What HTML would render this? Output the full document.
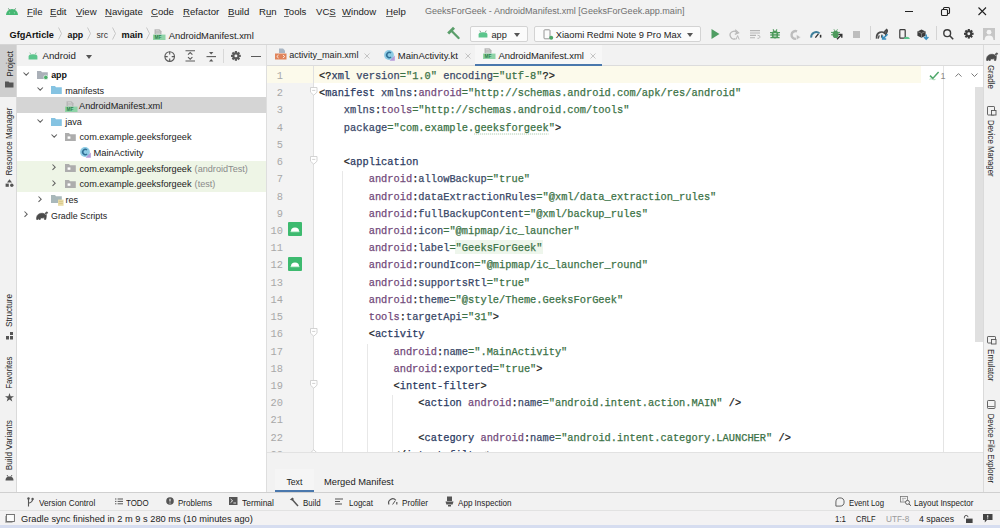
<!DOCTYPE html>
<html><head><meta charset="utf-8"><style>
*{margin:0;padding:0;box-sizing:border-box}
html,body{width:1000px;height:528px;overflow:hidden;background:#f2f2f2;font-family:"Liberation Sans",sans-serif;color:#222;position:relative}
.a{position:absolute}
.t{position:absolute;white-space:nowrap;line-height:1}
u{text-decoration:underline;text-decoration-thickness:0.8px;text-underline-offset:0.5px;text-decoration-color:#666}
svg{position:absolute;overflow:visible}
.cl{position:absolute;left:0;white-space:pre;font-family:"Liberation Mono",monospace;font-size:10.35px;line-height:1;color:#222;-webkit-text-stroke:0.25px currentColor}
.ln{position:absolute;width:16px;text-align:right;font-family:"Liberation Mono",monospace;font-size:10.35px;line-height:1;color:#a8a8a8}
.tg{color:#2b3a62}.at{color:#394868}.ns{color:#72497a}.vl{color:#3b7246}.pu{color:#222}
.vt{position:absolute;white-space:nowrap;line-height:1;writing-mode:vertical-rl}
.vb{transform:rotate(180deg)}
</style></head><body>
<div class="a" style="left:0px;top:0px;width:1000px;height:21px;background:#f2f2f2;"></div>
<div class="a" style="left:0px;top:21px;width:1000px;height:1px;background:#e4e4e4;"></div>
<div class="a" style="left:0px;top:21px;width:1000px;height:23px;background:#f2f2f2;"></div>
<div class="a" style="left:0px;top:44px;width:1000px;height:1px;background:#d6d6d6;"></div>
<div class="a" style="left:0px;top:45px;width:16px;height:448px;background:#f2f2f2;"></div>
<div class="a" style="left:0px;top:45px;width:16px;height:52px;background:#cecece;"></div>
<div class="a" style="left:16px;top:45px;width:1px;height:448px;background:#dadada;"></div>
<div class="a" style="left:17px;top:45px;width:249px;height:21px;background:#f2f2f2;"></div>
<div class="a" style="left:17px;top:66px;width:249px;height:427px;background:#ffffff;"></div>
<div class="a" style="left:266px;top:45px;width:1px;height:448px;background:#dedede;"></div>
<div class="a" style="left:267px;top:45px;width:716px;height:20px;background:#f2f2f2;"></div>
<div class="a" style="left:267px;top:65px;width:716px;height:1px;background:#dcdcdc;"></div>
<div class="a" style="left:267px;top:66px;width:47px;height:387px;background:#f3f3f3;"></div>
<div class="a" style="left:314px;top:66px;width:669px;height:387px;background:#ffffff;"></div>
<div class="a" style="left:267px;top:452px;width:716px;height:41px;background:#f2f2f2;"></div>
<div class="a" style="left:267px;top:452px;width:716px;height:1px;background:#e2e2e2;"></div>
<div class="a" style="left:983px;top:45px;width:17px;height:448px;background:#f2f2f2;"></div>
<div class="a" style="left:983px;top:45px;width:1px;height:448px;background:#dadada;"></div>
<div class="a" style="left:0px;top:492px;width:1000px;height:1px;background:#d0d0d0;"></div>
<div class="a" style="left:0px;top:493px;width:1000px;height:17px;background:#f2f2f2;"></div>
<div class="a" style="left:0px;top:510px;width:1000px;height:1px;background:#e2e2e2;"></div>
<div class="a" style="left:0px;top:511px;width:1000px;height:14px;background:#f3f2f3;"></div>
<div class="a" style="left:0px;top:525px;width:1000px;height:3px;background:#d6ddf0;"></div>
<svg style="left:5px;top:6px;" width="14" height="10" viewBox="0 0 14 10"><path d="M1 9 A6 6 0 0 1 13 9 Z" fill="#46b874"/><path d="M3.4 2.4 L4.6 4.2 M10.6 2.4 L9.4 4.2" stroke="#5a9a70" stroke-width="1"/><circle cx="4.6" cy="6.8" r="0.6" fill="#9fdcb5"/><circle cx="9.4" cy="6.8" r="0.6" fill="#9fdcb5"/></svg>
<span class="t" style="left:27px;top:7px;font-size:9.6px;color:#1c1c1c;font-weight:normal;"><u>F</u>ile</span>
<span class="t" style="left:50px;top:7px;font-size:9.6px;color:#1c1c1c;font-weight:normal;"><u>E</u>dit</span>
<span class="t" style="left:76px;top:7px;font-size:9.6px;color:#1c1c1c;font-weight:normal;"><u>V</u>iew</span>
<span class="t" style="left:105px;top:7px;font-size:9.6px;color:#1c1c1c;font-weight:normal;"><u>N</u>avigate</span>
<span class="t" style="left:151px;top:7px;font-size:9.6px;color:#1c1c1c;font-weight:normal;"><u>C</u>ode</span>
<span class="t" style="left:183px;top:7px;font-size:9.6px;color:#1c1c1c;font-weight:normal;"><u>R</u>efactor</span>
<span class="t" style="left:228px;top:7px;font-size:9.6px;color:#1c1c1c;font-weight:normal;"><u>B</u>uild</span>
<span class="t" style="left:259px;top:7px;font-size:9.6px;color:#1c1c1c;font-weight:normal;">R<u>u</u>n</span>
<span class="t" style="left:284px;top:7px;font-size:9.6px;color:#1c1c1c;font-weight:normal;"><u>T</u>ools</span>
<span class="t" style="left:316px;top:7px;font-size:9.6px;color:#1c1c1c;font-weight:normal;">VC<u>S</u></span>
<span class="t" style="left:342px;top:7px;font-size:9.6px;color:#1c1c1c;font-weight:normal;"><u>W</u>indow</span>
<span class="t" style="left:386px;top:7px;font-size:9.6px;color:#1c1c1c;font-weight:normal;"><u>H</u>elp</span>
<span class="t" style="left:425px;top:7px;font-size:9.05px;color:#707070;font-weight:normal;">GeeksForGeek - AndroidManifest.xml [GeeksForGeek.app.main]</span>
<div class="a" style="left:905px;top:11px;width:8px;height:1px;background:#222;"></div>
<svg style="left:940px;top:6px;" width="11" height="10" viewBox="0 0 11 10"><rect x="1.5" y="3.5" width="6" height="6" rx="1" fill="none" stroke="#222" stroke-width="1.1"/><path d="M3.5 3.5 V2.5 Q3.5 1.5 4.5 1.5 H8.5 Q9.5 1.5 9.5 2.5 V6.5 Q9.5 7.5 8.5 7.5 H7.5" fill="none" stroke="#222" stroke-width="1.1"/></svg>
<svg style="left:978px;top:7px;" width="9" height="9" viewBox="0 0 9 9"><path d="M0.5 0.5 L8 8 M8 0.5 L0.5 8" stroke="#222" stroke-width="1.1"/></svg>
<span class="t" style="left:9.5px;top:30.8px;font-size:9.2px;color:#111;font-weight:bold;">GfgArticle</span>
<svg style="left:58px;top:27px;" width="4" height="13" viewBox="0 0 4 13"><path d="M0.5 0.5 L3.5 6.5 L0.5 12.5" fill="none" stroke="#c2c2c2" stroke-width="0.9"/></svg>
<span class="t" style="left:67.5px;top:30.8px;font-size:8.8px;color:#111;font-weight:bold;">app</span>
<svg style="left:87px;top:27px;" width="4" height="13" viewBox="0 0 4 13"><path d="M0.5 0.5 L3.5 6.5 L0.5 12.5" fill="none" stroke="#c2c2c2" stroke-width="0.9"/></svg>
<span class="t" style="left:96.5px;top:30.8px;font-size:8.6px;color:#333;font-weight:normal;">src</span>
<svg style="left:112px;top:27px;" width="4" height="13" viewBox="0 0 4 13"><path d="M0.5 0.5 L3.5 6.5 L0.5 12.5" fill="none" stroke="#c2c2c2" stroke-width="0.9"/></svg>
<span class="t" style="left:121.5px;top:30.8px;font-size:9.2px;color:#111;font-weight:bold;">main</span>
<svg style="left:146px;top:27px;" width="4" height="13" viewBox="0 0 4 13"><path d="M0.5 0.5 L3.5 6.5 L0.5 12.5" fill="none" stroke="#c2c2c2" stroke-width="0.9"/></svg>
<svg style="left:153px;top:28.5px;" width="13" height="11" viewBox="0 0 13 11"><path d="M1.5 0.3 H6.5 L8.5 2.3 V5.5 H1.5 Z" fill="#b8b8b8"/><path d="M3 1.6 H6 M3 3 H7 M3 4.4 H7" stroke="#dedede" stroke-width="0.6"/><rect x="0" y="5.6" width="12.5" height="5.4" fill="#8fd3a6"/><text x="1.4" y="10.2" font-family="Liberation Sans" font-weight="bold" font-size="4.8" fill="#2b7d4b">MF</text></svg>
<span class="t" style="left:168.8px;top:30.8px;font-size:9.4px;color:#222;font-weight:normal;">AndroidManifest.xml</span>
<svg style="left:446px;top:26px;" width="14" height="14" viewBox="0 0 14 14"><path d="M2.2 7.6 L8 1.8" stroke="#5a9e6a" stroke-width="2.8" stroke-linecap="butt"/><path d="M5.4 4.8 L12.6 12" stroke="#5a9e6a" stroke-width="2.3" stroke-linecap="round"/></svg>
<div class="a" style="left:469.5px;top:25.5px;width:58px;height:16px;background:#fbfbfb;border:1px solid #d3d3d3;border-radius:2px"></div>
<svg style="left:477.5px;top:29.5px;" width="10" height="8" viewBox="0 0 10 8"><path d="M0.6 7.4 V4.4 Q0.6 2.2 5 2.2 Q9.4 2.2 9.4 4.4 V7.4 Z" fill="#5bc58c"/><path d="M1.8 0.6 L2.8 2.4 M8.2 0.6 L7.2 2.4" stroke="#6a8a76" stroke-width="0.8"/></svg>
<span class="t" style="left:491.5px;top:30.7px;font-size:9.2px;color:#222;font-weight:normal;">app</span>
<svg style="left:514px;top:32.5px;" width="6" height="4" viewBox="0 0 6 4"><path d="M0 0 H6 L3 4 Z" fill="#555"/></svg>
<div class="a" style="left:533.5px;top:25.5px;width:167px;height:16px;background:#fbfbfb;border:1px solid #d3d3d3;border-radius:2px"></div>
<svg style="left:543px;top:28.5px;" width="11" height="11" viewBox="0 0 11 11"><rect x="1" y="0.8" width="6" height="9" rx="0.8" fill="none" stroke="#8a8a8a" stroke-width="0.9"/><circle cx="8.2" cy="8.8" r="2" fill="#4ea86a"/></svg>
<span class="t" style="left:555.7px;top:30.7px;font-size:9.35px;color:#222;font-weight:normal;">Xiaomi Redmi Note 9 Pro Max</span>
<svg style="left:687px;top:32.5px;" width="6" height="4" viewBox="0 0 6 4"><path d="M0 0 H6 L3 4 Z" fill="#555"/></svg>
<svg style="left:710.5px;top:29px;" width="9" height="10" viewBox="0 0 9 10"><path d="M0.5 0 L8.5 5 L0.5 10 Z" fill="#4f9d62"/></svg>
<svg style="left:728.5px;top:28.5px;" width="11" height="11" viewBox="0 0 11 11"><path d="M8.2 4.2 A3.8 3.8 0 1 0 6.5 9.6" fill="none" stroke="#b9b9b9" stroke-width="1.3"/><path d="M6.2 0.8 L9.6 3.8 L5.8 5.4" fill="none" stroke="#b9b9b9" stroke-width="1.2"/><path d="M7 10.5 L8.6 6.6 L10.2 10.5" fill="none" stroke="#b9b9b9" stroke-width="1"/></svg>
<svg style="left:750px;top:30px;" width="11" height="9" viewBox="0 0 11 9"><path d="M0 0.6 H10 M0 3 H10 M0 5.4 H6 M0 7.8 H5" stroke="#b5b5b5" stroke-width="1.1"/><path d="M7.5 5.2 Q10.5 5.4 10 7.2 Q9.6 8.6 7.4 8.3" fill="none" stroke="#b5b5b5" stroke-width="0.9"/></svg>
<svg style="left:770px;top:28.8px;" width="10" height="10" viewBox="0 0 10 10"><ellipse cx="5" cy="5.6" rx="3.4" ry="3.8" fill="#4d9a5c"/><path d="M0 3.6 H10 M0 6 H10 M0.4 8.6 H9.6 M3 0.4 L4 2 M7 0.4 L6 2" stroke="#4d9a5c" stroke-width="1.1"/><rect x="3.6" y="4.2" width="2.8" height="1" fill="#d8ecd9"/><rect x="3.6" y="6.6" width="2.8" height="1" fill="#d8ecd9"/></svg>
<svg style="left:789.5px;top:29.5px;" width="11" height="10" viewBox="0 0 11 10"><path d="M7 1.4 A3.9 3.9 0 1 0 6.2 8.8" fill="none" stroke="#bdbdbd" stroke-width="2.4"/><path d="M6.4 4.4 L10.8 7.2 L6.4 10 Z" fill="#bdbdbd" stroke="#f2f2f2" stroke-width="0.6"/></svg>
<svg style="left:809.5px;top:30.5px;" width="12" height="7" viewBox="0 0 12 7"><path d="M1.2 6.6 A5 5 0 0 1 9.6 2.4" fill="none" stroke="#3f7f9b" stroke-width="1.9"/><path d="M5.4 6.6 L8.4 2.8" stroke="#2d2d2d" stroke-width="1.3"/><path d="M10.6 3.8 V6.6" stroke="#2d2d2d" stroke-width="1.5"/></svg>
<svg style="left:831px;top:28.8px;" width="12" height="11" viewBox="0 0 12 11"><ellipse cx="4.6" cy="5.4" rx="3" ry="3.6" fill="#4d9a5c"/><path d="M0 3.4 H9 M0 5.8 H5 M3 0.4 L3.8 1.8 M6.4 0.4 L5.6 1.8" stroke="#4d9a5c" stroke-width="1"/><path d="M6 10.2 L10.6 5.6 M7.4 5.4 H10.8 V8.8" fill="none" stroke="#333" stroke-width="1.4"/></svg>
<div class="a" style="left:853px;top:30.5px;width:7px;height:7px;background:#bdbdbd;"></div>
<div class="a" style="left:869.5px;top:25.5px;width:1px;height:14px;background:#d4d4d4;"></div>
<svg style="left:876px;top:29px;" width="13" height="11" viewBox="0 0 13 11"><path d="M0.6 9.6 Q0.2 4.8 3.8 3.4 Q6.6 2.4 8.4 4 Q9 1.6 10.6 0.6 Q11.8 1.6 10.6 3.6 Q9.6 5 9.8 7" fill="none" stroke="#4a4a4a" stroke-width="1.7"/><path d="M2.2 9.6 L3.2 6.4 M5.6 8.6 L6 5.6" stroke="#4a4a4a" stroke-width="1.4"/><path d="M11.6 5.2 L7 9.6 M6.6 6.4 V10 H10.2" fill="none" stroke="#3a8fbf" stroke-width="1.5"/></svg>
<svg style="left:898.5px;top:29px;" width="11" height="10" viewBox="0 0 11 10"><rect x="0.8" y="0.6" width="5.4" height="8.6" rx="0.8" fill="none" stroke="#3a3a3a" stroke-width="1.2"/><path d="M4.6 10 A3.4 3.4 0 0 1 11 10 Z" fill="#5bc58c"/></svg>
<svg style="left:917px;top:28.5px;" width="12" height="11" viewBox="0 0 12 11"><path d="M4.5 0.4 L8.6 2.4 V6.8 L4.5 8.8 L0.4 6.8 V2.4 Z" fill="#3c3c3c"/><path d="M0.6 2.5 L4.5 4.4 L8.4 2.5 M4.5 4.4 V8.6" stroke="#999" stroke-width="0.7" fill="none"/><path d="M9.2 5.6 V10 M7 8 L9.2 10.2 L11.4 8" fill="none" stroke="#3a8fbf" stroke-width="1.5"/></svg>
<div class="a" style="left:935.5px;top:25.5px;width:1px;height:14px;background:#d4d4d4;"></div>
<svg style="left:943px;top:28.5px;" width="11" height="11" viewBox="0 0 11 11"><circle cx="4.2" cy="4.2" r="3.4" fill="none" stroke="#3c3c3c" stroke-width="1.4"/><path d="M6.8 6.8 L10.2 10.2" stroke="#3c3c3c" stroke-width="1.6"/></svg>
<svg style="left:963.8px;top:28.8px;" width="9.6" height="9.6" viewBox="0 0 9.6 9.6"><rect x="3.74" y="0" width="2.11" height="2.88" fill="#3c3c3c" transform="rotate(0 4.8 4.8)"/><rect x="3.74" y="0" width="2.11" height="2.88" fill="#3c3c3c" transform="rotate(45 4.8 4.8)"/><rect x="3.74" y="0" width="2.11" height="2.88" fill="#3c3c3c" transform="rotate(90 4.8 4.8)"/><rect x="3.74" y="0" width="2.11" height="2.88" fill="#3c3c3c" transform="rotate(135 4.8 4.8)"/><rect x="3.74" y="0" width="2.11" height="2.88" fill="#3c3c3c" transform="rotate(180 4.8 4.8)"/><rect x="3.74" y="0" width="2.11" height="2.88" fill="#3c3c3c" transform="rotate(225 4.8 4.8)"/><rect x="3.74" y="0" width="2.11" height="2.88" fill="#3c3c3c" transform="rotate(270 4.8 4.8)"/><rect x="3.74" y="0" width="2.11" height="2.88" fill="#3c3c3c" transform="rotate(315 4.8 4.8)"/><circle cx="4.8" cy="4.8" r="3.46" fill="#3c3c3c"/><circle cx="4.8" cy="4.8" r="1.44" fill="#f2f2f2"/></svg>
<div class="a" style="left:983px;top:28px;width:12px;height:12px;background:#c6c6c6;"></div>
<svg style="left:983px;top:28px;" width="12" height="12" viewBox="0 0 12 12"><circle cx="6" cy="4.2" r="2.4" fill="#f4f4f4"/><path d="M1.6 12 Q1.6 7.6 6 7.6 Q10.4 7.6 10.4 12 Z" fill="#f4f4f4"/></svg>
<span class="vt vb" style="left:5.5px;top:50.50px;font-size:8.3px;color:#2a2a2a;">Project</span>
<svg style="left:5px;top:81px;" width="9" height="7" viewBox="0 0 9 7"><path d="M0 0.5 H3.5 L4.5 1.6 H8.5 V6.5 H0 Z" fill="#555"/></svg>
<span class="vt vb" style="left:5.2px;top:104.53px;font-size:8.6px;color:#262626;transform:rotate(180deg) scaleY(0.927)">Resource Manager</span>
<svg style="left:5px;top:178.5px;" width="9" height="8" viewBox="0 0 9 8"><path d="M4.5 0.2 L7 3.6 H2 Z" fill="#555"/><rect x="0.6" y="4.6" width="3.2" height="3.2" fill="#555"/><circle cx="6.8" cy="6.2" r="1.7" fill="#555"/></svg>
<span class="vt vb" style="left:5.2px;top:293.25px;font-size:8.6px;color:#262626;transform:rotate(180deg) scaleY(0.946)">Structure</span>
<svg style="left:5.5px;top:332px;" width="8" height="8" viewBox="0 0 8 8"><rect x="4" y="0" width="3" height="3" fill="#555"/><rect x="0" y="4" width="3" height="3.5" fill="#555"/><rect x="4" y="4" width="3" height="3.5" fill="#555"/></svg>
<span class="vt vb" style="left:5.2px;top:355.02px;font-size:8.6px;color:#262626;transform:rotate(180deg) scaleY(0.916)">Favorites</span>
<svg style="left:5px;top:393px;" width="9" height="9" viewBox="0 0 9 9"><path d="M4.5 0 L5.6 3.2 H9 L6.3 5.2 L7.3 8.6 L4.5 6.5 L1.7 8.6 L2.7 5.2 L0 3.2 H3.4 Z" fill="#555"/></svg>
<span class="vt vb" style="left:5.2px;top:418.58px;font-size:8.6px;color:#262626;transform:rotate(180deg) scaleY(0.954)">Build Variants</span>
<svg style="left:5px;top:474px;" width="9" height="7" viewBox="0 0 9 7"><path d="M0.5 6.5 A4 4 0 0 1 8.5 6.5 Z" fill="#555"/><path d="M2 1 L3.2 2.8 M7 1 L5.8 2.8" stroke="#555" stroke-width="0.9"/></svg>
<svg style="left:28px;top:52px;" width="10" height="8" viewBox="0 0 10 8"><path d="M0.6 7.4 V4.4 Q0.6 2.2 5 2.2 Q9.4 2.2 9.4 4.4 V7.4 Z" fill="#5bc58c"/><path d="M1.8 0.6 L2.8 2.4 M8.2 0.6 L7.2 2.4" stroke="#7fb894" stroke-width="0.8"/></svg>
<span class="t" style="left:42.5px;top:51px;font-size:9.7px;color:#222;font-weight:normal;">Android</span>
<svg style="left:86px;top:55px;" width="6" height="4" viewBox="0 0 6 4"><path d="M0 0 H6 L3 4 Z" fill="#555"/></svg>
<svg style="left:164px;top:50.5px;" width="12" height="12" viewBox="0 0 12 12"><circle cx="5.7" cy="5.6" r="4.8" fill="none" stroke="#5a5a5a" stroke-width="1.1"/><path d="M5.7 0.8 V3.6 M5.7 7.6 V10.4 M0.9 5.6 H3.7 M7.7 5.6 H10.5" stroke="#5a5a5a" stroke-width="1.1"/></svg>
<svg style="left:185px;top:50px;" width="11" height="12" viewBox="0 0 11 12"><path d="M0.5 0.8 H10 M0.5 11 H10" stroke="#5a5a5a" stroke-width="1.1"/><path d="M3 4.6 L5.2 2.6 L7.4 4.6 M3 7.2 L5.2 9.2 L7.4 7.2" fill="none" stroke="#5a5a5a" stroke-width="1.1"/></svg>
<svg style="left:205.5px;top:50.5px;" width="11" height="12" viewBox="0 0 11 12"><path d="M0.5 5.6 H10" stroke="#5a5a5a" stroke-width="1.1"/><path d="M3 1 L5.2 3.4 L7.4 1 Z M3 10.4 L5.2 8 L7.4 10.4 Z" fill="#5a5a5a"/></svg>
<div class="a" style="left:223px;top:49px;width:1px;height:14px;background:#d8d8d8;"></div>
<svg style="left:231px;top:51px;" width="9.8" height="9.8" viewBox="0 0 9.8 9.8"><rect x="3.82" y="0" width="2.16" height="2.94" fill="#5a5a5a" transform="rotate(0 4.9 4.9)"/><rect x="3.82" y="0" width="2.16" height="2.94" fill="#5a5a5a" transform="rotate(45 4.9 4.9)"/><rect x="3.82" y="0" width="2.16" height="2.94" fill="#5a5a5a" transform="rotate(90 4.9 4.9)"/><rect x="3.82" y="0" width="2.16" height="2.94" fill="#5a5a5a" transform="rotate(135 4.9 4.9)"/><rect x="3.82" y="0" width="2.16" height="2.94" fill="#5a5a5a" transform="rotate(180 4.9 4.9)"/><rect x="3.82" y="0" width="2.16" height="2.94" fill="#5a5a5a" transform="rotate(225 4.9 4.9)"/><rect x="3.82" y="0" width="2.16" height="2.94" fill="#5a5a5a" transform="rotate(270 4.9 4.9)"/><rect x="3.82" y="0" width="2.16" height="2.94" fill="#5a5a5a" transform="rotate(315 4.9 4.9)"/><circle cx="4.9" cy="4.9" r="3.53" fill="#5a5a5a"/><circle cx="4.9" cy="4.9" r="1.47" fill="#f2f2f2"/></svg>
<div class="a" style="left:251px;top:56px;width:10px;height:1.2px;background:#5a5a5a;"></div>
<div class="a" style="left:17px;top:97px;width:249px;height:16px;background:#d5d5d5;"></div>
<div class="a" style="left:17px;top:160.5px;width:249px;height:31px;background:#eef5e6;"></div>
<svg style="left:23px;top:71.8px;" width="7" height="4" viewBox="0 0 7 4"><path d="M0.5 0.5 L3.2 3.2 L5.9 0.5" fill="none" stroke="#606060" stroke-width="1.05"/></svg>
<svg style="left:37px;top:70.8px;" width="11" height="8" viewBox="0 0 11 8"><path d="M0 0 H4 L5 1.2 H10.8 V8 H0 Z" fill="#aab0b8"/><circle cx="8.8" cy="6.4" r="2.2" fill="#4caf6a" stroke="#fff" stroke-width="0.6"/></svg>
<span class="t" style="left:51.2px;top:71.17px;font-size:8.9px;color:#111;font-weight:bold;">app</span>
<svg style="left:37px;top:87.4px;" width="7" height="4" viewBox="0 0 7 4"><path d="M0.5 0.5 L3.2 3.2 L5.9 0.5" fill="none" stroke="#606060" stroke-width="1.05"/></svg>
<svg style="left:51px;top:86.4px;" width="11" height="8" viewBox="0 0 11 8"><path d="M0 0 H4 L5 1.2 H10.8 V8 H0 Z" fill="#85c3e2"/></svg>
<span class="t" style="left:65.2px;top:86.6px;font-size:9.1px;color:#222;font-weight:normal;">manifests</span>
<svg style="left:65px;top:100.5px;" width="13" height="11" viewBox="0 0 13 11"><path d="M1.5 0.3 H6.5 L8.5 2.3 V5.5 H1.5 Z" fill="#b8b8b8"/><path d="M3 1.6 H6 M3 3 H7 M3 4.4 H7" stroke="#dedede" stroke-width="0.6"/><rect x="0" y="5.6" width="12.5" height="5.4" fill="#8fd3a6"/><text x="1.4" y="10.2" font-family="Liberation Sans" font-weight="bold" font-size="4.8" fill="#2b7d4b">MF</text></svg>
<span class="t" style="left:79px;top:102.11px;font-size:9.2px;color:#222;font-weight:normal;">AndroidManifest.xml</span>
<svg style="left:37px;top:118.6px;" width="7" height="4" viewBox="0 0 7 4"><path d="M0.5 0.5 L3.2 3.2 L5.9 0.5" fill="none" stroke="#606060" stroke-width="1.05"/></svg>
<svg style="left:51px;top:117.6px;" width="11" height="8" viewBox="0 0 11 8"><path d="M0 0 H4 L5 1.2 H10.8 V8 H0 Z" fill="#85c3e2"/></svg>
<span class="t" style="left:65.2px;top:117.8px;font-size:9.1px;color:#222;font-weight:normal;">java</span>
<svg style="left:51px;top:134.2px;" width="7" height="4" viewBox="0 0 7 4"><path d="M0.5 0.5 L3.2 3.2 L5.9 0.5" fill="none" stroke="#606060" stroke-width="1.05"/></svg>
<svg style="left:65px;top:133.0px;" width="11" height="8" viewBox="0 0 11 8"><path d="M0 0 H4 L5 1.2 H10.8 V8 H0 Z" fill="#adadad"/><rect x="2.6" y="3.4" width="2.8" height="2.4" fill="#fff"/></svg>
<span class="t" style="left:79.5px;top:133.34px;font-size:9.17px;color:#222;font-weight:normal;">com.example.geeksforgeek</span>
<svg style="left:79.5px;top:146.60000000000002px;" width="11" height="11" viewBox="0 0 11 11"><circle cx="5" cy="5" r="4.9" fill="#8dcbe4"/><path d="M7 3 A2.6 2.6 0 1 0 7 7" fill="none" stroke="#2f6f95" stroke-width="1.6"/><path d="M5.6 10.8 L10.8 5.6 V10.8 Z" fill="#b59bd9"/></svg>
<span class="t" style="left:93.5px;top:148.77px;font-size:9.37px;color:#222;font-weight:normal;">MainActivity</span>
<svg style="left:52px;top:164.4px;" width="4" height="7" viewBox="0 0 4 7"><path d="M0.5 0.5 L3.2 3.2 L0.5 5.9" fill="none" stroke="#606060" stroke-width="1.05"/></svg>
<svg style="left:65px;top:164.20000000000002px;" width="11" height="8" viewBox="0 0 11 8"><path d="M0 0 H4 L5 1.2 H10.8 V8 H0 Z" fill="#adadad"/><rect x="2.6" y="3.4" width="2.8" height="2.4" fill="#fff"/></svg>
<span class="t" style="left:79.5px;top:164.54px;font-size:9.17px;color:#222;font-weight:normal;">com.example.geeksforgeek</span>
<span class="t" style="left:194.6px;top:164.55px;font-size:9.15px;color:#8a8a8a;font-weight:normal;">(androidTest)</span>
<svg style="left:52px;top:180.0px;" width="4" height="7" viewBox="0 0 4 7"><path d="M0.5 0.5 L3.2 3.2 L0.5 5.9" fill="none" stroke="#606060" stroke-width="1.05"/></svg>
<svg style="left:65px;top:179.8px;" width="11" height="8" viewBox="0 0 11 8"><path d="M0 0 H4 L5 1.2 H10.8 V8 H0 Z" fill="#adadad"/><rect x="2.6" y="3.4" width="2.8" height="2.4" fill="#fff"/></svg>
<span class="t" style="left:79.5px;top:180.14px;font-size:9.17px;color:#222;font-weight:normal;">com.example.geeksforgeek</span>
<span class="t" style="left:194.6px;top:180.15px;font-size:9.15px;color:#8a8a8a;font-weight:normal;">(test)</span>
<svg style="left:38px;top:195.6px;" width="4" height="7" viewBox="0 0 4 7"><path d="M0.5 0.5 L3.2 3.2 L0.5 5.9" fill="none" stroke="#606060" stroke-width="1.05"/></svg>
<svg style="left:51px;top:195.4px;" width="13" height="11" viewBox="0 0 13 11"><path d="M0 0 H4 L5 1.2 H10.8 V8 H0 Z" fill="#a9b8ba"/><rect x="7" y="4.6" width="5.6" height="6.2" fill="#e9dca6"/><path d="M7.8 6.4 H11.8 M7.8 8.4 H11.8" stroke="#cbb97a" stroke-width="0.6"/></svg>
<span class="t" style="left:65.4px;top:195.71px;font-size:9.2px;color:#222;font-weight:normal;">res</span>
<svg style="left:24px;top:211.2px;" width="4" height="7" viewBox="0 0 4 7"><path d="M0.5 0.5 L3.2 3.2 L0.5 5.9" fill="none" stroke="#606060" stroke-width="1.05"/></svg>
<svg style="left:36px;top:211.2px;" width="12" height="9" viewBox="0 0 12 9"><g transform="scale(1.0)"><path d="M0.6 8.4 Q0.2 3.4 4.4 2.4 Q7.2 1.8 8.8 3.2 Q9.4 1.2 10.8 0.9 Q11.9 1 11.6 2.2 Q11 1.7 10.5 2.1 Q10 3.4 10.3 5.6 L9.8 8.4 H8.4 L8.3 6.6 Q6.4 7.4 4.6 6.8 L4.3 8.4 H2.9 L2.7 6.8 L2 8.4 Z" fill="#4a4a4a" stroke="#4a4a4a" stroke-width="0.7" stroke-linejoin="round"/><circle cx="9.6" cy="3.6" r="0.45" fill="#fff"/></g></svg>
<span class="t" style="left:51px;top:211.59px;font-size:8.87px;color:#222;font-weight:normal;">Gradle Scripts</span>
<div class="a" style="left:475px;top:45px;width:127px;height:20px;background:#f7f7f7;"></div>
<div class="a" style="left:475px;top:64px;width:127px;height:2px;background:#4a78ad;"></div>
<svg style="left:274.5px;top:47.5px;" width="12" height="12" viewBox="0 0 12 12"><path d="M4 0.5 H8 L10 2.5 V5 H4 Z" fill="#a9b6c4"/><rect x="0" y="5.5" width="11.5" height="6" fill="#e0835a"/><path d="M3.6 7 L1.8 8.5 L3.6 10 M7.9 7 L9.7 8.5 L7.9 10" fill="none" stroke="#fff" stroke-width="0.8"/></svg>
<span class="t" style="left:289.2px;top:51.4px;font-size:9.1px;color:#222;font-weight:normal;">activity_main.xml</span>
<svg style="left:364.0px;top:52.5px;" width="6" height="6" viewBox="0 0 6 6"><path d="M0.5 0.5 L5.5 5.5 M5.5 0.5 L0.5 5.5" stroke="#bdbdbd" stroke-width="0.9"/></svg>
<svg style="left:383.5px;top:49.5px;" width="11" height="11" viewBox="0 0 11 11"><circle cx="5" cy="5" r="4.9" fill="#8dcbe4"/><path d="M7 3 A2.6 2.6 0 1 0 7 7" fill="none" stroke="#2f6f95" stroke-width="1.6"/><path d="M5.6 10.8 L10.8 5.6 V10.8 Z" fill="#b59bd9"/></svg>
<span class="t" style="left:397.8px;top:51.2px;font-size:9.5px;color:#222;font-weight:normal;">MainActivity.kt</span>
<svg style="left:465.0px;top:52.5px;" width="6" height="6" viewBox="0 0 6 6"><path d="M0.5 0.5 L5.5 5.5 M5.5 0.5 L0.5 5.5" stroke="#bdbdbd" stroke-width="0.9"/></svg>
<svg style="left:483px;top:48px;" width="13" height="11" viewBox="0 0 13 11"><path d="M1.5 0.3 H6.5 L8.5 2.3 V5.5 H1.5 Z" fill="#b8b8b8"/><path d="M3 1.6 H6 M3 3 H7 M3 4.4 H7" stroke="#dedede" stroke-width="0.6"/><rect x="0" y="5.6" width="12.5" height="5.4" fill="#8fd3a6"/><text x="1.4" y="10.2" font-family="Liberation Sans" font-weight="bold" font-size="4.8" fill="#2b7d4b">MF</text></svg>
<span class="t" style="left:498.4px;top:51.2px;font-size:9.45px;color:#222;font-weight:normal;">AndroidManifest.xml</span>
<svg style="left:590.0px;top:52.5px;" width="6" height="6" viewBox="0 0 6 6"><path d="M0.5 0.5 L5.5 5.5 M5.5 0.5 L0.5 5.5" stroke="#bdbdbd" stroke-width="0.9"/></svg>
<div class="a" style="left:267px;top:66px;width:654px;height:17px;background:#fcfaeb;"></div>
<div class="a" style="left:313px;top:66px;width:1px;height:387px;background:#e0e0e0;"></div>
<div class="a" style="left:341.8px;top:171.3px;width:1px;height:280.7px;background:#e8e8e8;"></div>
<div class="a" style="left:366.7px;top:343.5px;width:1px;height:108.5px;background:#e8e8e8;"></div>
<div class="a" style="left:391.5px;top:395.2px;width:1px;height:56.8px;background:#e8e8e8;"></div>
<div class="a" style="left:454.6px;top:240.2px;width:88.9px;height:14px;background:#eef6ec;"></div>
<div class="a" style="left:267px;top:66px;width:716px;height:386px;overflow:hidden">
<div class="cl" style="left:52px;top:5.00px"><span class="pu">&lt;?</span><span class="tg">xml</span> <span class="at">version</span><span class="vl">="1.0"</span> <span class="at">encoding</span><span class="vl">="utf-8"</span><span class="pu">?&gt;</span></div>
<div class="ln" style="left:3.4px;top:5.00px;width:12.6px">1</div>
<div class="cl" style="left:52px;top:22.22px"><span class="pu">&lt;</span><span class="tg">manifest</span> <span class="at">xmlns</span><span class="pu">:</span><span class="ns">android</span><span class="vl">="http://schemas.android.com/apk/res/android"</span></div>
<div class="ln" style="left:3.4px;top:22.22px;width:12.6px">2</div>
<div class="cl" style="left:52px;top:39.44px">    <span class="at">xmlns</span><span class="pu">:</span><span class="ns">tools</span><span class="vl">="http://schemas.android.com/tools"</span></div>
<div class="ln" style="left:3.4px;top:39.44px;width:12.6px">3</div>
<div class="cl" style="left:52px;top:56.66px">    <span class="at">package</span><span class="vl">="com.example.geeksforgeek"</span><span class="pu">&gt;</span></div>
<div class="ln" style="left:3.4px;top:56.66px;width:12.6px">4</div>
<div class="cl" style="left:52px;top:73.88px"></div>
<div class="ln" style="left:3.4px;top:73.88px;width:12.6px">5</div>
<div class="cl" style="left:52px;top:91.10px">    <span class="pu">&lt;</span><span class="tg">application</span></div>
<div class="ln" style="left:3.4px;top:91.10px;width:12.6px">6</div>
<div class="cl" style="left:52px;top:108.32px">        <span class="ns">android</span><span class="pu">:</span><span class="at">allowBackup</span><span class="vl">="true"</span></div>
<div class="ln" style="left:3.4px;top:108.32px;width:12.6px">7</div>
<div class="cl" style="left:52px;top:125.54px">        <span class="ns">android</span><span class="pu">:</span><span class="at">dataExtractionRules</span><span class="vl">="@xml/data_extraction_rules"</span></div>
<div class="ln" style="left:3.4px;top:125.54px;width:12.6px">8</div>
<div class="cl" style="left:52px;top:142.76px">        <span class="ns">android</span><span class="pu">:</span><span class="at">fullBackupContent</span><span class="vl">="@xml/backup_rules"</span></div>
<div class="ln" style="left:3.4px;top:142.76px;width:12.6px">9</div>
<div class="cl" style="left:52px;top:159.98px">        <span class="ns">android</span><span class="pu">:</span><span class="at">icon</span><span class="vl">="@mipmap/ic_launcher"</span></div>
<div class="ln" style="left:3.4px;top:159.98px;width:12.6px">10</div>
<div class="cl" style="left:52px;top:177.20px">        <span class="ns">android</span><span class="pu">:</span><span class="at">label</span><span class="vl">="GeeksForGeek"</span></div>
<div class="ln" style="left:3.4px;top:177.20px;width:12.6px">11</div>
<div class="cl" style="left:52px;top:194.42px">        <span class="ns">android</span><span class="pu">:</span><span class="at">roundIcon</span><span class="vl">="@mipmap/ic_launcher_round"</span></div>
<div class="ln" style="left:3.4px;top:194.42px;width:12.6px">12</div>
<div class="cl" style="left:52px;top:211.64px">        <span class="ns">android</span><span class="pu">:</span><span class="at">supportsRtl</span><span class="vl">="true"</span></div>
<div class="ln" style="left:3.4px;top:211.64px;width:12.6px">13</div>
<div class="cl" style="left:52px;top:228.86px">        <span class="ns">android</span><span class="pu">:</span><span class="at">theme</span><span class="vl">="@style/Theme.GeeksForGeek"</span></div>
<div class="ln" style="left:3.4px;top:228.86px;width:12.6px">14</div>
<div class="cl" style="left:52px;top:246.08px">        <span class="ns">tools</span><span class="pu">:</span><span class="at">targetApi</span><span class="vl">="31"</span><span class="pu">&gt;</span></div>
<div class="ln" style="left:3.4px;top:246.08px;width:12.6px">15</div>
<div class="cl" style="left:52px;top:263.30px">        <span class="pu">&lt;</span><span class="tg">activity</span></div>
<div class="ln" style="left:3.4px;top:263.30px;width:12.6px">16</div>
<div class="cl" style="left:52px;top:280.52px">            <span class="ns">android</span><span class="pu">:</span><span class="at">name</span><span class="vl">=".MainActivity"</span></div>
<div class="ln" style="left:3.4px;top:280.52px;width:12.6px">17</div>
<div class="cl" style="left:52px;top:297.74px">            <span class="ns">android</span><span class="pu">:</span><span class="at">exported</span><span class="vl">="true"</span><span class="pu">&gt;</span></div>
<div class="ln" style="left:3.4px;top:297.74px;width:12.6px">18</div>
<div class="cl" style="left:52px;top:314.96px">            <span class="pu">&lt;</span><span class="tg">intent-filter</span><span class="pu">&gt;</span></div>
<div class="ln" style="left:3.4px;top:314.96px;width:12.6px">19</div>
<div class="cl" style="left:52px;top:332.18px">                <span class="pu">&lt;</span><span class="tg">action</span> <span class="ns">android</span><span class="pu">:</span><span class="at">name</span><span class="vl">="android.intent.action.MAIN"</span> <span class="pu">/&gt;</span></div>
<div class="ln" style="left:3.4px;top:332.18px;width:12.6px">20</div>
<div class="cl" style="left:52px;top:349.40px"></div>
<div class="ln" style="left:3.4px;top:349.40px;width:12.6px">21</div>
<div class="cl" style="left:52px;top:366.62px">                <span class="pu">&lt;</span><span class="tg">category</span> <span class="ns">android</span><span class="pu">:</span><span class="at">name</span><span class="vl">="android.intent.category.LAUNCHER"</span> <span class="pu">/&gt;</span></div>
<div class="ln" style="left:3.4px;top:366.62px;width:12.6px">22</div>
<div class="cl" style="left:52px;top:383.84px">            <span class="pu">&lt;/</span><span class="tg">intent-filter</span><span class="pu">&gt;</span></div>
<div class="ln" style="left:3.4px;top:383.84px;width:12.6px">23</div>
</div>
<svg style="left:287.5px;top:222.48px;" width="14" height="14" viewBox="0 0 14 14"><rect x="0" y="0" width="14" height="14" rx="1" fill="#3dba6f"/><path d="M3 9 A4 3.6 0 0 1 11 9 Z" fill="#fff"/><rect x="2.6" y="9" width="8.8" height="1.2" fill="#c8efd6"/></svg>
<svg style="left:287.5px;top:256.91999999999996px;" width="14" height="14" viewBox="0 0 14 14"><rect x="0" y="0" width="14" height="14" rx="1" fill="#3dba6f"/><path d="M3 9 A4 3.6 0 0 1 11 9 Z" fill="#fff"/><rect x="2.6" y="9" width="8.8" height="1.2" fill="#c8efd6"/></svg>
<svg style="left:309.5px;top:87.22px;" width="8" height="9" viewBox="0 0 8 9"><path d="M0.5 0.5 H7 V5.2 L3.75 8.2 L0.5 5.2 Z" fill="#fff" stroke="#c9c9c9" stroke-width="0.8"/><path d="M2.2 3.4 H5.3" stroke="#bdbdbd" stroke-width="0.7"/></svg>
<svg style="left:309.5px;top:156.1px;" width="8" height="9" viewBox="0 0 8 9"><path d="M0.5 0.5 H7 V5.2 L3.75 8.2 L0.5 5.2 Z" fill="#fff" stroke="#c9c9c9" stroke-width="0.8"/><path d="M2.2 3.4 H5.3" stroke="#bdbdbd" stroke-width="0.7"/></svg>
<svg style="left:309.5px;top:328.29999999999995px;" width="8" height="9" viewBox="0 0 8 9"><path d="M0.5 0.5 H7 V5.2 L3.75 8.2 L0.5 5.2 Z" fill="#fff" stroke="#c9c9c9" stroke-width="0.8"/><path d="M2.2 3.4 H5.3" stroke="#bdbdbd" stroke-width="0.7"/></svg>
<svg style="left:309.5px;top:379.96px;" width="8" height="9" viewBox="0 0 8 9"><path d="M0.5 0.5 H7 V5.2 L3.75 8.2 L0.5 5.2 Z" fill="#fff" stroke="#c9c9c9" stroke-width="0.8"/><path d="M2.2 3.4 H5.3" stroke="#bdbdbd" stroke-width="0.7"/></svg>
<div class="a" style="left:300px;top:440px;width:20px;height:12px;overflow:hidden"><svg style="left:9.5px;top:8.839999999999975px;" width="8" height="9" viewBox="0 0 8 9"><path d="M0.5 8.5 H7 V3.8 L3.75 0.8 L0.5 3.8 Z" fill="#fff" stroke="#c9c9c9" stroke-width="0.8"/></svg>
</div><svg style="left:474.2px;top:133.2px;" width="74.5" height="2" viewBox="0 0 74.5 2"><path d="M0 1 H74.5" stroke="#a9c7ab" stroke-width="0.9" stroke-dasharray="1.2 0.8"/></svg>
<div class="a" style="left:943px;top:66px;width:1px;height:386px;background:#e4e4e4;"></div>
<svg style="left:928.5px;top:71px;" width="11" height="9" viewBox="0 0 11 9"><path d="M1 4.6 L3.8 7.4 L9.6 1" fill="none" stroke="#4ea86a" stroke-width="1.5"/><path d="M0.5 8.3 Q2 7.2 3.5 8.3 Q5 9.4 6.5 8.3" fill="none" stroke="#82c593" stroke-width="0.7"/></svg>
<span class="t" style="left:940.5px;top:72px;font-size:9px;color:#8a8a8a;font-weight:normal;">1</span>
<svg style="left:954.5px;top:72.5px;" width="7" height="4" viewBox="0 0 7 4"><path d="M0.5 3.6 L3.5 0.6 L6.5 3.6" fill="none" stroke="#6a6a6a" stroke-width="0.9"/></svg>
<svg style="left:971px;top:73px;" width="7" height="4" viewBox="0 0 7 4"><path d="M0.5 0.5 L3.5 3.5 L6.5 0.5" fill="none" stroke="#6a6a6a" stroke-width="0.9"/></svg>
<div class="a" style="left:975px;top:87px;width:8px;height:255px;background:#e0e0e0;"></div>
<div class="a" style="left:275px;top:469px;width:39px;height:21px;background:#f5f5f5;"></div>
<span class="t" style="left:286.4px;top:478.3px;font-size:8.7px;color:#222;font-weight:normal;">Text</span>
<span class="t" style="left:324px;top:478.3px;font-size:9.35px;color:#222;font-weight:normal;">Merged Manifest</span>
<div class="a" style="left:275px;top:490px;width:39px;height:2px;background:#4a78ad;"></div>
<svg style="left:986px;top:52px;" width="12" height="9" viewBox="0 0 12 9"><g transform="scale(1.0)"><path d="M0.6 8.4 Q0.2 3.4 4.4 2.4 Q7.2 1.8 8.8 3.2 Q9.4 1.2 10.8 0.9 Q11.9 1 11.6 2.2 Q11 1.7 10.5 2.1 Q10 3.4 10.3 5.6 L9.8 8.4 H8.4 L8.3 6.6 Q6.4 7.4 4.6 6.8 L4.3 8.4 H2.9 L2.7 6.8 L2 8.4 Z" fill="#4a4a4a" stroke="#4a4a4a" stroke-width="0.7" stroke-linejoin="round"/><circle cx="9.6" cy="3.6" r="0.45" fill="#fff"/></g></svg>
<span class="vt" style="left:986.6px;top:64.49px;font-size:8.6px;color:#262626;transform:scaleY(0.930)">Gradle</span>
<svg style="left:986.5px;top:106px;" width="10" height="10" viewBox="0 0 10 10"><rect x="0.5" y="0.5" width="7" height="8.5" rx="0.6" fill="none" stroke="#555" stroke-width="0.9"/><rect x="4.5" y="4.5" width="4.5" height="4.5" fill="#f2f2f2" stroke="#555" stroke-width="0.9"/></svg>
<span class="vt" style="left:986.6px;top:117.34px;font-size:8.6px;color:#262626;transform:scaleY(0.905)">Device Manager</span>
<svg style="left:986.5px;top:336px;" width="10" height="9" viewBox="0 0 10 9"><rect x="0.5" y="0.5" width="8" height="6.5" rx="0.6" fill="none" stroke="#555" stroke-width="0.9"/><rect x="4.5" y="3.5" width="4.5" height="4.5" fill="#f2f2f2" stroke="#555" stroke-width="0.9"/></svg>
<span class="vt" style="left:986.6px;top:347.94px;font-size:8.6px;color:#262626;transform:scaleY(0.939)">Emulator</span>
<svg style="left:987px;top:399.5px;" width="9" height="9" viewBox="0 0 9 9"><rect x="0.5" y="0.5" width="7.5" height="8" rx="0.8" fill="none" stroke="#555" stroke-width="0.9"/><path d="M1 6.5 H7.5" stroke="#555" stroke-width="0.8"/></svg>
<span class="vt" style="left:986.6px;top:409.77px;font-size:8.6px;color:#262626;transform:scaleY(0.903)">Device File Explorer</span>
<svg style="left:27px;top:497px;" width="7" height="10" viewBox="0 0 7 10"><circle cx="1.5" cy="1.5" r="1.2" fill="#555"/><circle cx="5.6" cy="2" r="1.2" fill="#555"/><path d="M1.5 1.5 V9.5 M5.6 2 Q5.6 5.4 1.5 6.2" fill="none" stroke="#555" stroke-width="1.1"/></svg>
<span class="t" style="left:38.7px;top:499px;font-size:8.6px;color:#222;font-weight:normal;transform:scaleX(0.957);transform-origin:0 0">Version Control</span>
<svg style="left:115px;top:497.5px;" width="8" height="8" viewBox="0 0 8 8"><path d="M0 1 H1.4 M0 3.4 H1.4 M0 5.8 H1.4 M2.6 1 H8 M2.6 3.4 H8 M2.6 5.8 H8" stroke="#555" stroke-width="1"/></svg>
<span class="t" style="left:126px;top:499px;font-size:8.6px;color:#222;font-weight:normal;transform:scaleX(0.923);transform-origin:0 0">TODO</span>
<svg style="left:166px;top:496.5px;" width="8" height="8" viewBox="0 0 8 8"><circle cx="4" cy="4" r="3.8" fill="#555"/><path d="M4 1.8 V4.6" stroke="#fff" stroke-width="1.1"/><circle cx="4" cy="6" r="0.6" fill="#fff"/></svg>
<span class="t" style="left:178px;top:499px;font-size:8.6px;color:#222;font-weight:normal;transform:scaleX(0.936);transform-origin:0 0">Problems</span>
<svg style="left:228.5px;top:497px;" width="9" height="8" viewBox="0 0 9 8"><rect x="0" y="0" width="8.5" height="8" fill="#555"/><path d="M1.6 2 L3.6 3.8 L1.6 5.6" fill="none" stroke="#fff" stroke-width="0.9"/><path d="M4.4 6 H7" stroke="#fff" stroke-width="0.8"/></svg>
<span class="t" style="left:241.5px;top:499px;font-size:8.6px;color:#222;font-weight:normal;transform:scaleX(0.984);transform-origin:0 0">Terminal</span>
<svg style="left:289px;top:496.5px;" width="10" height="10" viewBox="0 0 10 10"><path d="M0.8 2.8 L3.4 0.6 L5 2 L3.4 3.6 Z" fill="#555"/><path d="M3.2 2.6 L9 9" stroke="#555" stroke-width="1.5"/></svg>
<span class="t" style="left:302.5px;top:499px;font-size:8.6px;color:#222;font-weight:normal;transform:scaleX(0.920);transform-origin:0 0">Build</span>
<svg style="left:335px;top:497.5px;" width="8" height="8" viewBox="0 0 8 8"><path d="M0 1 H8 M0 3.5 H5 M0 6 H7" stroke="#555" stroke-width="1.1"/></svg>
<span class="t" style="left:348.5px;top:499px;font-size:8.6px;color:#222;font-weight:normal;transform:scaleX(0.929);transform-origin:0 0">Logcat</span>
<svg style="left:387.5px;top:497.5px;" width="10" height="7" viewBox="0 0 10 7"><path d="M1 6.5 A4 4 0 0 1 7.8 2.4" fill="none" stroke="#555" stroke-width="1.2"/><path d="M4.6 6.5 L7 3" stroke="#555" stroke-width="1"/><path d="M8.8 4 V6.5" stroke="#555" stroke-width="1.2"/></svg>
<span class="t" style="left:401.5px;top:499px;font-size:8.6px;color:#222;font-weight:normal;transform:scaleX(0.954);transform-origin:0 0">Profiler</span>
<svg style="left:445px;top:496px;" width="9" height="11" viewBox="0 0 9 11"><path d="M2 0.5 H7 V5 H2 Z" fill="#555"/><path d="M0.5 5.6 H8.5 L7.6 8.6 H1.4 Z" fill="#555"/><path d="M3 9 H6 V10.5 H3 Z" fill="#555"/></svg>
<span class="t" style="left:457.5px;top:499px;font-size:8.6px;color:#222;font-weight:normal;transform:scaleX(0.940);transform-origin:0 0">App Inspection</span>
<svg style="left:834.5px;top:496.5px;" width="10" height="10" viewBox="0 0 10 10"><path d="M0.9 5 A4.1 4.1 0 1 1 5 9.1 H0.9 Z" fill="none" stroke="#555" stroke-width="0.9"/></svg>
<span class="t" style="left:848.7px;top:499px;font-size:8.6px;color:#222;font-weight:normal;transform:scaleX(0.903);transform-origin:0 0">Event Log</span>
<svg style="left:900px;top:496px;" width="12" height="10" viewBox="0 0 12 10"><rect x="0.5" y="0.5" width="7" height="5.5" fill="none" stroke="#777" stroke-width="0.8"/><path d="M2 2.4 H6 M2 4 H4" stroke="#888" stroke-width="0.6"/><circle cx="7.5" cy="6.4" r="2" fill="#f2f2f2" stroke="#555" stroke-width="0.9"/><path d="M9 8 L11 9.8" stroke="#555" stroke-width="1"/></svg>
<span class="t" style="left:914px;top:499px;font-size:8.6px;color:#222;font-weight:normal;transform:scaleX(0.936);transform-origin:0 0">Layout Inspector</span>
<svg style="left:4.5px;top:514px;" width="10" height="9" viewBox="0 0 10 9"><rect x="1.4" y="0.5" width="8" height="7" fill="#fbfbfb" stroke="#666" stroke-width="0.9"/><path d="M0.5 2 V8.5 H7.5" fill="none" stroke="#aaa" stroke-width="0.9"/></svg>
<span class="t" style="left:21.2px;top:514.5px;font-size:9.1px;color:#222;font-weight:normal;transform:scaleX(1.019);transform-origin:0 0">Gradle sync finished in 2 m 9 s 280 ms (10 minutes ago)</span>
<span class="t" style="left:834.5px;top:514.5px;font-size:8.8px;color:#222;font-weight:normal;transform:scaleX(0.899);transform-origin:0 0">1:1</span>
<span class="t" style="left:856px;top:514.5px;font-size:8.8px;color:#222;font-weight:normal;transform:scaleX(0.848);transform-origin:0 0">CRLF</span>
<span class="t" style="left:885.7px;top:514.5px;font-size:8.8px;color:#9a9a9a;font-weight:normal;transform:scaleX(0.934);transform-origin:0 0">UTF-8</span>
<span class="t" style="left:918.7px;top:514.5px;font-size:8.8px;color:#222;font-weight:normal;transform:scaleX(0.994);transform-origin:0 0">4 spaces</span>
<svg style="left:962.5px;top:514.5px;" width="10" height="8" viewBox="0 0 10 8"><path d="M1.4 3.4 V2.2 A1.8 1.8 0 0 1 5 2.2" fill="none" stroke="#444" stroke-width="0.9"/><rect x="3" y="3.6" width="6.6" height="4.4" fill="#444"/></svg>
<svg style="left:982.5px;top:514px;" width="10" height="9" viewBox="0 0 10 9"><path d="M0 0 H9.5 V6 H4 L1.8 8.4 V6 H0 Z" fill="#444"/><path d="M4.75 1.2 V3.6" stroke="#fff" stroke-width="1"/><circle cx="4.75" cy="4.8" r="0.5" fill="#fff"/></svg>
</body></html>
